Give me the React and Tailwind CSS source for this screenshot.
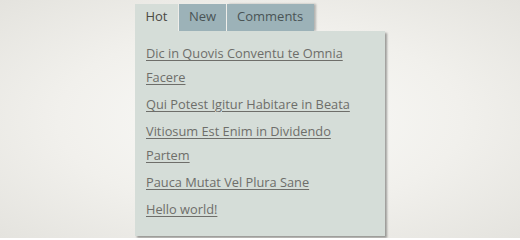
export default function App() {
  const links = [
    "Dic in Quovis Conventu te Omnia Facere",
    "Qui Potest Igitur Habitare in Beata",
    "Vitiosum Est Enim in Dividendo Partem",
    "Pauca Mutat Vel Plura Sane",
    "Hello world!",
  ];
  return (
    <div
      className="w-[520px] h-[238px] overflow-hidden bg-[radial-gradient(ellipse_at_center,#fbfbf9_0%,#f1f0ec_55%,#e4e3de_100%)] flex justify-start"
      style={{ fontFamily: '"Open Sans", sans-serif' }}
    >
      <div className="ml-[135px] mt-[4px] flex flex-col">
        <div className="flex h-[27px] items-stretch">
          <div className="w-[43px] bg-[#d5ddd8] text-[13px] text-[#4a4a44] flex items-center justify-center pb-[2px]">
            Hot
          </div>
          <div className="ml-[1px] w-[47px] bg-[#9cb2b8] text-[13px] text-[#4a5456] flex items-center justify-center pb-[2px]">
            New
          </div>
          <div className="ml-[1px] w-[87px] bg-[#9cb2b8] text-[13px] text-[#4a5456] flex items-center pl-[10px] pb-[2px] shadow-[2px_0_2px_rgba(0,0,0,0.25)]">
            Comments
          </div>
        </div>
        <div className="w-[250px] h-[205px] bg-[#d5ddd8] shadow-[2px_2px_2px_rgba(0,0,0,0.35)] pl-[11px] pr-[10px] pt-[10px]">
          <ul className="flex flex-col gap-[3px]">
            {links.map((l) => (
              <li key={l} className="text-[12.8px] leading-[24px]">
                <a href="#" className="text-[#6e6e6a] underline underline-offset-[2px]">
                  {l}
                </a>
              </li>
            ))}
          </ul>
        </div>
      </div>
    </div>
  );
}
